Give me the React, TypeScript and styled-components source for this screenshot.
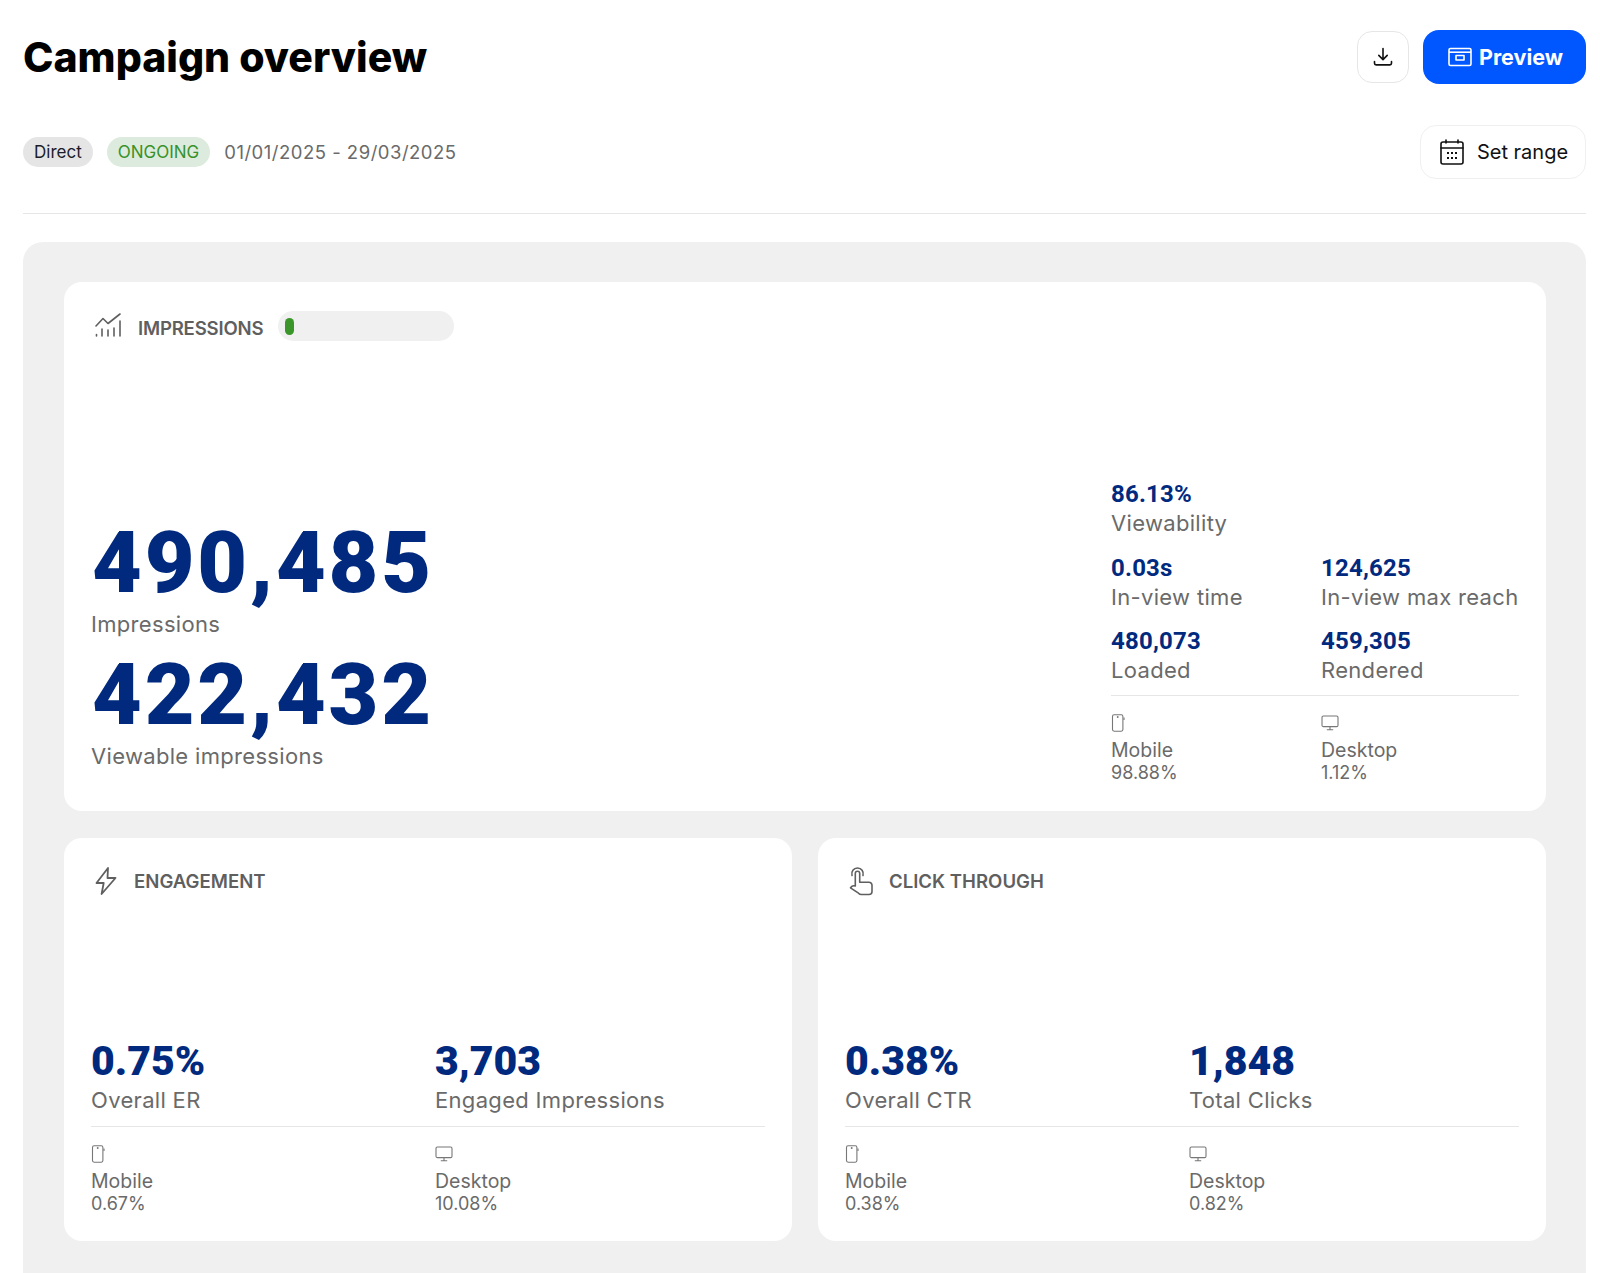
import styled, { createGlobalStyle } from 'styled-components';

const GlobalStyle = createGlobalStyle`
  html, body {
    margin: 0;
    padding: 0;
    background: #ffffff;
  }
  body {
    font-family: 'Inter', 'Liberation Sans', sans-serif;
    color: #666666;
  }
  * {
    box-sizing: border-box;
  }
`;

const NAVY = '#012a7f';
const GREY = '#6a6a6a';

const DownloadIcon = () => (
  <svg width="20" height="20" viewBox="0 0 20 20" fill="none" stroke="#111" strokeWidth="1.6" strokeLinecap="round" strokeLinejoin="round">
    <path d="M10 1.5V12.5M5.8 8.4 10 12.6l4.2-4.2" />
    <path d="M1.5 14.5v1.8a1.6 1.6 0 0 0 1.6 1.6h13.8a1.6 1.6 0 0 0 1.6-1.6v-1.8" />
  </svg>
);

const PreviewIcon = () => (
  <svg width="24" height="20" viewBox="0 0 24 20" fill="none" stroke="#fff" strokeWidth="1.6" strokeLinejoin="round">
    <rect x="1" y="1.5" width="22" height="17" rx="1.5" />
    <path d="M1 5.2H23" />
    <rect x="8" y="8.5" width="8" height="4.5" />
  </svg>
);

const CalendarIcon = () => (
  <svg width="24" height="26" viewBox="0 0 24 26" fill="none" stroke="#111" strokeWidth="1.6" strokeLinecap="round">
    <rect x="1" y="3" width="22" height="22" rx="2" />
    <path d="M1 9H23M6 1V4M18 1V4" />
    <g fill="#111" stroke="none">
      <rect x="7" y="13" width="2" height="2" />
      <rect x="11" y="13" width="2" height="2" />
      <rect x="15" y="13" width="2" height="2" />
      <rect x="7" y="18" width="2" height="2" />
      <rect x="11" y="18" width="2" height="2" />
      <rect x="15" y="18" width="2" height="2" />
    </g>
  </svg>
);

const ChartIcon = () => (
  <svg width="26" height="24" viewBox="0 0 26 24" fill="none" stroke="#5f5f5f" strokeWidth="1.6" strokeLinecap="round" strokeLinejoin="round">
    <path d="M1 13 8 5.5l5 5L25 1" />
    <path d="M1.5 21.5V23M7 16V23M13 17V23M19 15V23M25 8V23" />
  </svg>
);

const BoltIcon = () => (
  <svg width="22" height="28" viewBox="0 0 22 28" fill="none" stroke="#5f5f5f" strokeWidth="1.8" strokeLinejoin="round">
    <path d="M13 1 1.5 16h7.2L6.6 27 20.5 11h-8L13 1Z" />
  </svg>
);

const TapIcon = () => (
  <svg width="24" height="29" viewBox="0 0 24 29" fill="none" stroke="#5f5f5f" strokeWidth="1.6" strokeLinecap="round" strokeLinejoin="round">
    <path d="M3 8.5C2 4.5 4.5 1 8.5 1s6.5 3.5 5.5 7.5" />
    <path d="M6.3 19V6.5a2.2 2.2 0 0 1 4.4 0v8.7h9.3a3 3 0 0 1 3 3v6.3a3 3 0 0 1-3 3h-7.5a4 4 0 0 1-3-1.3L1.5 20.8c1.2-1.8 3-2.5 4.8-1.8Z" />
  </svg>
);

const MobileIcon = () => (
  <svg width="14" height="18" viewBox="0 0 14 18" fill="none" stroke="#777" strokeWidth="1.1" strokeLinejoin="round">
    <rect x="1.5" y="0.8" width="10.4" height="16.4" rx="1.6" />
    <path d="M13 3.5V6" />
    <circle cx="6.7" cy="3" r="0.4" fill="#777" />
  </svg>
);

const DesktopIcon = () => (
  <svg width="18" height="16" viewBox="0 0 18 16" fill="none" stroke="#777" strokeWidth="1.1" strokeLinejoin="round">
    <rect x="1" y="1" width="16" height="10.6" rx="1.4" />
    <path d="M9 11.6V14.5M5.8 14.8H12.2" />
  </svg>
);

const Page = styled.div`
  width: 1600px;
  height: 1273px;
  overflow: hidden;
  padding: 0 14px 0 23px;
  display: flex;
  flex-direction: column;
`;

const TitleRow = styled.div`
  height: 84px;
  margin-top: 15px;
  display: flex;
  justify-content: space-between;
  align-items: center;
`;

const Title = styled.h1`
  margin: 0;
  font-size: 41px;
  font-weight: 800;
  color: #000000;
`;

const Actions = styled.div`
  display: flex;
  align-items: center;
  gap: 14px;
`;

const IconButton = styled.button`
  width: 52px;
  height: 52px;
  display: flex;
  align-items: center;
  justify-content: center;
  border: 1px solid #e6e6e6;
  border-radius: 15px;
  background: #ffffff;
  padding: 0;
`;

const PrimaryButton = styled.button`
  width: 163px;
  height: 54px;
  padding: 0 0 0 2px;
  display: flex;
  align-items: center;
  justify-content: center;
  gap: 7px;
  border: none;
  border-radius: 16px;
  background: #0057ff;
  color: #ffffff;
  font-family: inherit;
  font-size: 21.5px;
  font-weight: 700;
`;

const MetaRow = styled.div`
  height: 54px;
  margin-top: 26px;
  display: flex;
  justify-content: space-between;
  align-items: center;
`;

const MetaLeft = styled.div`
  display: flex;
  align-items: center;
  gap: 14px;
`;

const Chip = styled.span<{ $tone: 'grey' | 'green' }>`
  height: 30px;
  padding: 0 11px;
  display: inline-flex;
  align-items: center;
  border-radius: 15px;
  font-size: 17px;
  background: ${(p) => (p.$tone === 'green' ? '#dcebdd' : '#e5e5e5')};
  color: ${(p) => (p.$tone === 'green' ? '#38922a' : '#1a1c2a')};
`;

const DateRange = styled.span`
  font-size: 18.5px;
  color: #6a6a6a;
  letter-spacing: 0.5px;
`;

const RangeButton = styled.button`
  width: 166px;
  height: 54px;
  padding: 0 0 0 2px;
  display: flex;
  align-items: center;
  justify-content: center;
  gap: 13px;
  border: 1px solid #f0f0f0;
  border-radius: 16px;
  background: #ffffff;
  color: #111111;
  font-family: inherit;
  font-size: 20px;
`;

const Divider = styled.hr`
  width: 100%;
  height: 1px;
  margin: 34px 0 28px;
  border: none;
  background: #e6e6e6;
`;

const Panel = styled.main`
  flex: 1;
  display: flex;
  flex-direction: column;
  gap: 27px;
  padding: 40px 40px 32px 41px;
  background: #f0f0f0;
  border-radius: 20px 20px 0 0;
`;

const Card = styled.section<{ $height: number }>`
  height: ${(p) => p.$height}px;
  padding: 26px 27px 26px 27px;
  display: flex;
  flex-direction: column;
  background: #ffffff;
  border-radius: 18px;
`;

const CardRow = styled.div`
  display: grid;
  grid-template-columns: 1fr 1fr;
  gap: 26px;
`;

const CardHead = styled.header<{ $gap: number }>`
  height: 34px;
  padding-left: 4px;
  display: flex;
  align-items: center;
  gap: ${(p) => p.$gap}px;
  flex: none;
`;

const CardTitle = styled.h2`
  margin: 0;
  font-size: 18.6px;
  font-weight: 600;
  color: #5f5f5f;
`;

const LowTitle = styled(CardTitle)`
  margin-top: 6px;
  letter-spacing: -0.2px;
`;

const Track = styled.div`
  width: 176px;
  height: 30px;
  margin: 2px 0 0 -2px;
  padding: 7px;
  border-radius: 15px;
  background: #f0f0f0;
`;

const TrackFill = styled.div`
  width: 9px;
  height: 17px;
  border-radius: 4.5px;
  background: #3a962b;
`;

const HeroBody = styled.div`
  flex: 1;
  display: flex;
  justify-content: space-between;
  align-items: flex-end;
`;

const HeroStats = styled.div`
  display: flex;
  flex-direction: column;
  gap: 10px;
  padding-bottom: 16px;
`;

const HeroValue = styled.div`
  font-family: 'Roboto', 'Inter', sans-serif;
  font-size: 86px;
  line-height: 96px;
  font-weight: 900;
  letter-spacing: 2.8px;
  padding-left: 1px;
  color: ${NAVY};
`;

const Label = styled.div`
  font-size: 22px;
  line-height: 26px;
  letter-spacing: 0.32px;
  white-space: nowrap;
  color: ${GREY};
`;

const SideStats = styled.div`
  width: 408px;
  display: grid;
  grid-template-columns: 210px 1fr;
  padding-bottom: 1px;
`;

const SideStat = styled.div<{ $full?: boolean }>`
  grid-column: ${(p) => (p.$full ? '1 / -1' : 'auto')};
  margin-bottom: 15.5px;
`;

const SideValue = styled.div`
  font-family: 'Roboto', 'Inter', sans-serif;
  font-size: 24px;
  line-height: 32px;
  font-weight: 700;
  letter-spacing: 0.2px;
  color: ${NAVY};
`;

const SideRule = styled.div`
  grid-column: 1 / -1;
  height: 1px;
  margin: -3.5px 0 17px;
  background: #e6e6e6;
`;

const BottomBody = styled.div`
  flex: 1;
  display: flex;
  flex-direction: column;
  justify-content: flex-end;
`;

const MetricGrid = styled.div`
  display: grid;
  grid-template-columns: 344px 1fr;
`;

const MetricValue = styled.div`
  font-family: 'Roboto', 'Inter', sans-serif;
  font-size: 41px;
  line-height: 52px;
  font-weight: 900;
  color: ${NAVY};
`;

const BottomRule = styled.div`
  height: 1px;
  margin: 13px 0 17px;
  background: #e6e6e6;
`;

const DeviceIcon = styled.div`
  height: 20px;
  display: flex;
  align-items: center;
`;

const DeviceName = styled.div`
  margin-top: 6px;
  font-size: 19.5px;
  line-height: 22px;
  color: ${GREY};
`;

const DevicePct = styled.div`
  margin-top: 1px;
  font-size: 18px;
  line-height: 22px;
  color: ${GREY};
`;

function DeviceCell({ mobile, value }: { mobile?: boolean; value: string }) {
  return (
    <div>
      <DeviceIcon>{mobile ? <MobileIcon /> : <DesktopIcon />}</DeviceIcon>
      <DeviceName>{mobile ? 'Mobile' : 'Desktop'}</DeviceName>
      <DevicePct>{value}</DevicePct>
    </div>
  );
}

function Metrics(props: {
  a: [string, string];
  b: [string, string];
  mobile: string;
  desktop: string;
}) {
  return (
    <BottomBody>
      <MetricGrid>
        <div>
          <MetricValue>{props.a[0]}</MetricValue>
          <Label>{props.a[1]}</Label>
        </div>
        <div>
          <MetricValue>{props.b[0]}</MetricValue>
          <Label>{props.b[1]}</Label>
        </div>
      </MetricGrid>
      <BottomRule />
      <MetricGrid>
        <DeviceCell mobile value={props.mobile} />
        <DeviceCell value={props.desktop} />
      </MetricGrid>
    </BottomBody>
  );
}

export default function App() {
  return (
    <Page>
      <GlobalStyle />
      <TitleRow>
        <Title>Campaign overview</Title>
        <Actions>
          <IconButton aria-label="Download"><DownloadIcon /></IconButton>
          <PrimaryButton><PreviewIcon />Preview</PrimaryButton>
        </Actions>
      </TitleRow>
      <MetaRow>
        <MetaLeft>
          <Chip $tone="grey">Direct</Chip>
          <Chip $tone="green">ONGOING</Chip>
          <DateRange>01/01/2025 - 29/03/2025</DateRange>
        </MetaLeft>
        <RangeButton><CalendarIcon />Set range</RangeButton>
      </MetaRow>
      <Divider />
      <Panel>
        <Card $height={529}>
          <CardHead $gap={17}>
            <ChartIcon />
            <LowTitle>IMPRESSIONS</LowTitle>
            <Track><TrackFill /></Track>
          </CardHead>
          <HeroBody>
            <HeroStats>
              <div>
                <HeroValue>490,485</HeroValue>
                <Label>Impressions</Label>
              </div>
              <div>
                <HeroValue>422,432</HeroValue>
                <Label>Viewable impressions</Label>
              </div>
            </HeroStats>
            <SideStats>
              <SideStat $full>
                <SideValue>86.13%</SideValue>
                <Label>Viewability</Label>
              </SideStat>
              <SideStat>
                <SideValue>0.03s</SideValue>
                <Label>In-view time</Label>
              </SideStat>
              <SideStat>
                <SideValue>124,625</SideValue>
                <Label>In-view max reach</Label>
              </SideStat>
              <SideStat>
                <SideValue>480,073</SideValue>
                <Label>Loaded</Label>
              </SideStat>
              <SideStat>
                <SideValue>459,305</SideValue>
                <Label>Rendered</Label>
              </SideStat>
              <SideRule />
              <DeviceCell mobile value="98.88%" />
              <DeviceCell value="1.12%" />
            </SideStats>
          </HeroBody>
        </Card>
        <CardRow>
          <Card $height={403}>
            <CardHead $gap={17}>
              <BoltIcon />
              <CardTitle>ENGAGEMENT</CardTitle>
            </CardHead>
            <Metrics
              a={['0.75%', 'Overall ER']}
              b={['3,703', 'Engaged Impressions']}
              mobile="0.67%"
              desktop="10.08%"
            />
          </Card>
          <Card $height={403}>
            <CardHead $gap={16}>
              <TapIcon />
              <CardTitle>CLICK THROUGH</CardTitle>
            </CardHead>
            <Metrics
              a={['0.38%', 'Overall CTR']}
              b={['1,848', 'Total Clicks']}
              mobile="0.38%"
              desktop="0.82%"
            />
          </Card>
        </CardRow>
      </Panel>
    </Page>
  );
}
